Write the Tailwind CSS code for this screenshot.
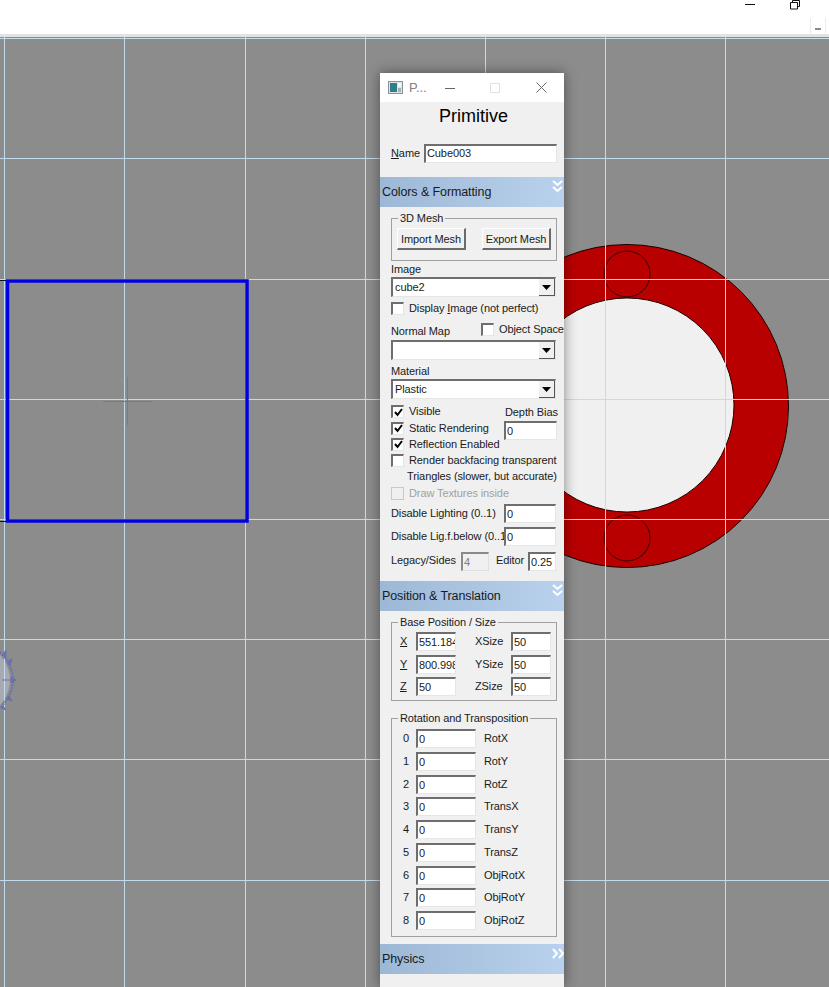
<!DOCTYPE html>
<html lang="en">
<head>
    <meta charset="UTF-8">
    <title>Primitive</title>
    <script src="https://cdn.jsdelivr.net/npm/@tailwindcss/browser@4"></script>
</head>
<body class="w-[829px] h-[987px] overflow-hidden flex flex-col bg-white font-['Liberation_Sans',sans-serif] text-[11px] tracking-[-0.1px] text-[#1a1a1a]">
    <!-- host window strip -->
    <header class="h-[37px] shrink-0 flex flex-col border-b-[3px] border-b-[#e2e2e2]">
        <div class="h-[18px] flex items-start">
            <svg class="ml-[745px]" width="10" height="8" viewBox="0 0 10 8"><path d="M0 4.5H10" stroke="#111" stroke-width="1"/></svg>
            <svg class="ml-[35px]" width="10" height="10" viewBox="0 0 10 10" fill="none" stroke="#111"><path d="M2.5 2.5V.5H9.5V6.5H7.5"/><path d="M.5 2.5H7.5V9H.5Z"/></svg>
        </div>
        <div class="flex justify-end pr-[3px]">
            <div class="w-[16px] h-[16px] border-l border-r border-[#ececec] flex items-center justify-center"><div class="w-[6px] h-[2px] bg-[#8a8a8a] mt-[6px]"></div></div>
        </div>
    </header>

    <main class="relative flex-1 bg-[#8c8c8c]">
        <!-- drawing canvas, coordinates are page coordinates -->
        <svg class="absolute top-0 left-0" width="829" height="950" viewBox="0 37 829 950">
            <circle cx="627" cy="406" r="161.5" fill="#b80000" stroke="#1a0000" stroke-width="1"/>
            <circle cx="627" cy="405" r="107" fill="#f0f0f0" stroke="#200" stroke-width="1"/>
            <circle cx="627" cy="274" r="23" fill="none" stroke="#300" stroke-width="1"/>
            <circle cx="627" cy="538" r="23" fill="none" stroke="#300" stroke-width="1"/>
            <g stroke="#c3dcec" stroke-width="1">
                <path d="M4.5 37V987M124.500 37V987M245.500 37V987M365.500 37V987M485.500 37V987M605.500 37V987M725.500 37V987"/>
                <path d="M0 38.500H829M0 158.500H829M0 279.500H829M0 399.500H829M0 519.500H829M0 639.500H829M0 759.500H829M0 880.500H829"/>
            </g>
            <path d="M103 401.500H152M127.500 377V425" stroke="#7c7c7c" stroke-width="1"/>
            <path d="M0 280.500H6M0 521.500H6" stroke="#111" stroke-width="1"/>
            <rect x="7.500" y="281" width="239.500" height="240" fill="none" stroke="#0000e0" stroke-width="3.500"/>
            <path d="M0 655C6 662 10 671 10 680C10 689 6 698 0 705Z" fill="#a9a9b2"/>
            <path d="M4.500 650V712" stroke="#c3dcec" stroke-width="1"/>
            <g fill="#6c70ae" stroke="#6c70ae" stroke-width="1">
                <path d="M0 652C8 660 13 670 13 680C13 690 8 700 0 708" fill="none" stroke-width="2" stroke-dasharray="2 1"/>
                <path d="M11 677L16 680L11 683ZM8 661L12 659L10 666ZM9 696L12 701L7 699ZM3 654L6 650L6 658ZM3 706L6 710L1 708ZM2 680H10"/>
            </g>
        </svg>

        <!-- Primitive tool window -->
        <section class="absolute left-[380px] top-[36px] w-[184px] h-[914px] bg-[#f0f0f0] shadow-[0_0_12px_rgba(0,0,0,0.45)] flex flex-col">
            <div class="h-[29px] shrink-0 bg-white flex items-center">
                <svg class="ml-[8px]" width="15" height="13" viewBox="0 0 15 13"><rect x=".5" y=".5" width="14" height="12" fill="#dfe6e8" stroke="#8a9298"/><rect x="2" y="2" width="7" height="9" fill="#2f7f86"/><rect x="10" y="2" width="3" height="4" fill="#f6f6f6"/><rect x="10" y="7" width="3" height="4" fill="#9fb2b8"/></svg>
                <span class="ml-[6px] w-[27px] text-[13px] text-[#808080]">P...</span>
                <svg class="ml-[9px]" width="10" height="10" viewBox="0 0 10 10"><path d="M0 5.500H10" stroke="#666"/></svg>
                <svg class="ml-[35px]" width="10" height="10" viewBox="0 0 10 10"><rect x=".5" y=".5" width="9" height="9" fill="none" stroke="#e2e2e2"/></svg>
                <svg class="ml-[36px]" width="11" height="11" viewBox="0 0 11 11"><path d="M.5 .5L10.500 10.500M10.500 .5L.5 10.500" stroke="#666"/></svg>
            </div>
            <h1 class="h-[27px] mt-[1px] pl-[3px] shrink-0 text-[18px] tracking-normal leading-[27px] text-center text-black">Primitive</h1>
            <div class="h-[19px] mt-[14px] shrink-0 flex items-center pl-[11px]">
                <span class="w-[33px]"><span class="underline">N</span>ame</span>
                <div class="w-[133px] h-[19px] border-l-2 border-t-2 border-r border-b border-l-[#6e6e6e] border-t-[#6e6e6e] border-r-[#e6e6e6] border-b-[#e6e6e6] bg-white leading-[15px] pl-[1px]">Cube003</div>
            </div>

            <div class="h-[30px] mt-[14px] shrink-0 flex bg-linear-to-r from-[#9db8d6] to-[#b9d1ec]">
                <span class="pl-[2px] text-[12.5px] leading-[30px]">Colors &amp; Formatting</span>
                <svg class="ml-auto mr-[1px] mt-[3px]" width="11" height="13" viewBox="0 0 11 13" fill="none" stroke="#fff" stroke-width="2"><path d="M1 1L5.500 5L10 1M1 7L5.500 11L10 7"/></svg>
            </div>

            <div class="w-[166px] ml-[11px] shrink-0 flex flex-col">
                <div class="relative h-[43px] mt-[11px] border border-[#a0a0a0] flex justify-between pt-[9px] px-[5px]">
                    <span class="absolute left-[6px] top-[-7px] px-[2px] bg-[#f0f0f0] leading-[13px]">3D Mesh</span>
                    <button class="w-[69px] h-[22px] pt-[1px] whitespace-nowrap bg-[#f0f0f0] border border-[#fff] border-r-2 border-b-2 border-r-[#6a6a6a] border-b-[#6a6a6a] text-[11px]">Import Mesh</button>
                    <button class="w-[69px] h-[22px] pt-[1px] whitespace-nowrap bg-[#f0f0f0] border border-[#fff] border-r-2 border-b-2 border-r-[#6a6a6a] border-b-[#6a6a6a] text-[11px]">Export Mesh</button>
                </div>

                <div class="h-[16px] leading-[16px]">Image</div>
                <div class="w-[165px] h-[20px] flex items-center bg-white border-l-2 border-t-2 border-r border-b border-l-[#6e6e6e] border-t-[#6e6e6e] border-r-[#e6e6e6] border-b-[#e6e6e6]">
                    <span class="pl-[2px]">cube2</span>
                    <div class="ml-auto w-[16px] h-[17px] bg-[#f0f0f0] border-r border-b border-[#555] flex items-center justify-center"><svg width="9" height="5" viewBox="0 0 9 5"><path d="M0 0H9L4.500 5Z" fill="#000"/></svg></div>
                </div>
                <div class="h-[16px] mt-[3px] flex items-center">
                    <div class="w-[13px] h-[13px] shrink-0 bg-white border-l-2 border-t-2 border-l-[#6e6e6e] border-t-[#6e6e6e] border-r border-b border-r-[#e6e6e6] border-b-[#e6e6e6]"></div>
                    <span class="ml-[5px]">Display <span class="underline">I</span>mage (not perfect)</span>
                </div>

                <div class="h-[18px] mt-[6px] flex items-center whitespace-nowrap">
                    <span class="w-[90px] shrink-0">Normal Map</span>
                    <div class="w-[13px] h-[13px] shrink-0 mb-[3px] bg-white border-l-2 border-t-2 border-l-[#6e6e6e] border-t-[#6e6e6e] border-r border-b border-r-[#e6e6e6] border-b-[#e6e6e6]"></div>
                    <span class="ml-[5px] mb-[3px]">Object Space</span>
                </div>
                <div class="w-[165px] h-[20px] flex items-center bg-white border-l-2 border-t-2 border-r border-b border-l-[#6e6e6e] border-t-[#6e6e6e] border-r-[#e6e6e6] border-b-[#e6e6e6]">
                    <div class="ml-auto w-[16px] h-[17px] bg-[#f0f0f0] border-r border-b border-[#555] flex items-center justify-center"><svg width="9" height="5" viewBox="0 0 9 5"><path d="M0 0H9L4.500 5Z" fill="#000"/></svg></div>
                </div>
                <div class="h-[15px] mt-[4px] leading-[15px]">Material</div>
                <div class="w-[165px] h-[20px] flex items-center bg-white border-l-2 border-t-2 border-r border-b border-l-[#6e6e6e] border-t-[#6e6e6e] border-r-[#e6e6e6] border-b-[#e6e6e6]">
                    <span class="pl-[2px]">Plastic</span>
                    <div class="ml-auto w-[16px] h-[17px] bg-[#f0f0f0] border-r border-b border-[#555] flex items-center justify-center"><svg width="9" height="5" viewBox="0 0 9 5"><path d="M0 0H9L4.500 5Z" fill="#000"/></svg></div>
                </div>

                <div class="h-[49px] mt-[4px] flex">
                    <div class="w-[113px] flex flex-col whitespace-nowrap">
                        <div class="h-[17px] flex items-center">
                            <div class="w-[13px] h-[13px] shrink-0 bg-white border-l-2 border-t-2 border-l-[#6e6e6e] border-t-[#6e6e6e] border-r border-b border-r-[#e6e6e6] border-b-[#e6e6e6] flex items-center justify-center"><svg width="9" height="9" viewBox="0 0 9 9"><path d="M1 4L3.500 7L8 1" fill="none" stroke="#000" stroke-width="2"/></svg></div>
                            <span class="ml-[5px]">Visible</span>
                        </div>
                        <div class="h-[16px] flex items-center">
                            <div class="w-[13px] h-[13px] shrink-0 bg-white border-l-2 border-t-2 border-l-[#6e6e6e] border-t-[#6e6e6e] border-r border-b border-r-[#e6e6e6] border-b-[#e6e6e6] flex items-center justify-center"><svg width="9" height="9" viewBox="0 0 9 9"><path d="M1 4L3.500 7L8 1" fill="none" stroke="#000" stroke-width="2"/></svg></div>
                            <span class="ml-[5px]">Static Rendering</span>
                        </div>
                        <div class="h-[16px] flex items-center">
                            <div class="w-[13px] h-[13px] shrink-0 bg-white border-l-2 border-t-2 border-l-[#6e6e6e] border-t-[#6e6e6e] border-r border-b border-r-[#e6e6e6] border-b-[#e6e6e6] flex items-center justify-center"><svg width="9" height="9" viewBox="0 0 9 9"><path d="M1 4L3.500 7L8 1" fill="none" stroke="#000" stroke-width="2"/></svg></div>
                            <span class="ml-[5px]">Reflection Enabled</span>
                        </div>
                    </div>
                    <div class="w-[53px] flex flex-col whitespace-nowrap">
                        <div class="h-[18px] leading-[18px] pl-[1px]">Depth Bias</div>
                        <div class="h-[19px] bg-white border-l-2 border-t-2 border-r border-b border-l-[#6e6e6e] border-t-[#6e6e6e] border-r-[#e6e6e6] border-b-[#e6e6e6] leading-[16px] pl-[1px]">0</div>
                    </div>
                </div>
                <div class="h-[16px] flex items-center whitespace-nowrap">
                    <div class="w-[13px] h-[13px] shrink-0 bg-white border-l-2 border-t-2 border-l-[#6e6e6e] border-t-[#6e6e6e] border-r border-b border-r-[#e6e6e6] border-b-[#e6e6e6]"></div>
                    <span class="ml-[5px]">Render backfacing transparent</span>
                </div>
                <div class="h-[17px] pl-[16px] leading-[17px] whitespace-nowrap">Triangles (slower, but accurate)</div>
                <div class="h-[16px] flex items-center text-[#a0a0a0]">
                    <div class="w-[13px] h-[13px] shrink-0 bg-[#f0f0f0] border border-[#c8c8c8]"></div>
                    <span class="ml-[5px]">Draw Textures inside</span>
                </div>
                <div class="h-[19px] mt-[3px] flex items-center">
                    <span class="w-[113px] shrink-0 whitespace-nowrap">Disable Lighting (0..1)</span>
                    <div class="w-[52px] h-[19px] bg-white border-l-2 border-t-2 border-r border-b border-l-[#6e6e6e] border-t-[#6e6e6e] border-r-[#e6e6e6] border-b-[#e6e6e6] leading-[16px] pl-[1px]">0</div>
                </div>
                <div class="h-[19px] mt-[4px] flex items-center">
                    <span class="w-[113px] shrink-0 overflow-hidden whitespace-nowrap">Disable Lig.f.below (0..1)</span>
                    <div class="w-[52px] h-[19px] bg-white border-l-2 border-t-2 border-r border-b border-l-[#6e6e6e] border-t-[#6e6e6e] border-r-[#e6e6e6] border-b-[#e6e6e6] leading-[16px] pl-[1px]">0</div>
                </div>
                <div class="h-[19px] mt-[6px] flex items-center">
                    <span class="w-[70px] shrink-0 mb-[2px]">Legacy/Sides</span>
                    <div class="w-[28px] h-[19px] bg-[#f0f0f0] text-[#808080] border-l-2 border-t-2 border-r border-b border-l-[#8a8a8a] border-t-[#8a8a8a] border-r-[#e0e0e0] border-b-[#e0e0e0] leading-[16px] pl-[1px]">4</div>
                    <span class="ml-[7px] w-[32px] shrink-0 mb-[2px]">Editor</span>
                    <div class="w-[28px] h-[19px] bg-white border-l-2 border-t-2 border-r border-b border-l-[#6e6e6e] border-t-[#6e6e6e] border-r-[#e6e6e6] border-b-[#e6e6e6] leading-[16px] pl-[1px]">0.25</div>
                </div>
            </div>

            <div class="h-[30px] mt-[10px] shrink-0 flex bg-linear-to-r from-[#9db8d6] to-[#b9d1ec]">
                <span class="pl-[2px] text-[12.5px] leading-[30px]">Position &amp; Translation</span>
                <svg class="ml-auto mr-[1px] mt-[3px]" width="11" height="13" viewBox="0 0 11 13" fill="none" stroke="#fff" stroke-width="2"><path d="M1 1L5.500 5L10 1M1 7L5.500 11L10 7"/></svg>
            </div>

            <div class="w-[166px] ml-[11px] shrink-0 flex flex-col">
                <div class="relative h-[79px] mt-[11px] border border-[#a0a0a0] pt-[9px] pl-[8px] flex flex-col">
                    <span class="absolute left-[6px] top-[-7px] px-[2px] bg-[#f0f0f0] leading-[13px]">Base Position / Size</span>
                    <div class="h-[19px] flex items-center">
                        <span class="w-[16px] underline">X</span>
                        <div class="w-[40px] h-[19px] overflow-hidden whitespace-nowrap bg-white border-l-2 border-t-2 border-r border-b border-l-[#6e6e6e] border-t-[#6e6e6e] border-r-[#e6e6e6] border-b-[#e6e6e6] leading-[16px] pl-[1px]">551.184</div>
                        <span class="ml-[19px] w-[36px]">XSize</span>
                        <div class="w-[40px] h-[19px] bg-white border-l-2 border-t-2 border-r border-b border-l-[#6e6e6e] border-t-[#6e6e6e] border-r-[#e6e6e6] border-b-[#e6e6e6] leading-[16px] pl-[1px]">50</div>
                    </div>
                    <div class="h-[19px] mt-[4px] flex items-center">
                        <span class="w-[16px] underline">Y</span>
                        <div class="w-[40px] h-[19px] overflow-hidden whitespace-nowrap bg-white border-l-2 border-t-2 border-r border-b border-l-[#6e6e6e] border-t-[#6e6e6e] border-r-[#e6e6e6] border-b-[#e6e6e6] leading-[16px] pl-[1px]">800.998</div>
                        <span class="ml-[19px] w-[36px]">YSize</span>
                        <div class="w-[40px] h-[19px] bg-white border-l-2 border-t-2 border-r border-b border-l-[#6e6e6e] border-t-[#6e6e6e] border-r-[#e6e6e6] border-b-[#e6e6e6] leading-[16px] pl-[1px]">50</div>
                    </div>
                    <div class="h-[19px] mt-[3px] flex items-center">
                        <span class="w-[16px] underline">Z</span>
                        <div class="w-[40px] h-[19px] bg-white border-l-2 border-t-2 border-r border-b border-l-[#6e6e6e] border-t-[#6e6e6e] border-r-[#e6e6e6] border-b-[#e6e6e6] leading-[16px] pl-[1px]">50</div>
                        <span class="ml-[19px] w-[36px]">ZSize</span>
                        <div class="w-[40px] h-[19px] bg-white border-l-2 border-t-2 border-r border-b border-l-[#6e6e6e] border-t-[#6e6e6e] border-r-[#e6e6e6] border-b-[#e6e6e6] leading-[16px] pl-[1px]">50</div>
                    </div>
                </div>

                <div id="rotation" class="relative h-[219px] mt-[17px] border border-[#a0a0a0] pt-[10px] pl-[11px] flex flex-col">
                    <span class="absolute left-[6px] top-[-7px] px-[2px] bg-[#f0f0f0] leading-[13px]">Rotation and Transposition</span>
                </div>
            </div>

            <div class="h-[30px] mt-[7px] shrink-0 flex bg-linear-to-r from-[#9db8d6] to-[#b9d1ec]">
                <span class="pl-[2px] text-[12.5px] leading-[30px]">Physics</span>
                <svg class="ml-auto mt-[4px]" width="12" height="11" viewBox="0 0 12 11" fill="none" stroke="#fff" stroke-width="2"><path d="M1 1L5 5.500L1 10M7 1L11 5.500L7 10"/></svg>
            </div>
        </section>
    </main>

    <script>
        const rotation = document.getElementById('rotation');
        const rows = ['RotX', 'RotY', 'RotZ', 'TransX', 'TransY', 'TransZ', 'ObjRotX', 'ObjRotY', 'ObjRotZ'];
        const gaps = [0, 4, 4, 3, 4, 4, 4, 3, 4];

        rows.forEach((name, i) => {
            const row = document.createElement('div');
            row.className = 'h-[19px] flex items-center';
            row.style.marginTop = gaps[i] + 'px';
            row.innerHTML = `<span class="w-[13px]">${i}</span>
                <div class="w-[60px] h-[19px] bg-white border-l-2 border-t-2 border-r border-b border-l-[#6e6e6e] border-t-[#6e6e6e] border-r-[#e6e6e6] border-b-[#e6e6e6] leading-[16px] pl-[1px]">0</div>
                <span class="ml-[8px]">${name}</span>`;
            rotation.appendChild(row);
        });
    </script>
</body>
</html>
